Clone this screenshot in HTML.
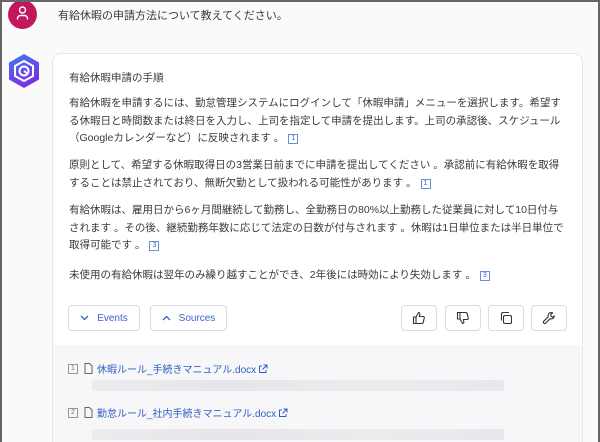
<!DOCTYPE html>
<html><head><meta charset="utf-8">
<style>
*{margin:0;padding:0;box-sizing:border-box}
html,body{width:600px;height:442px;overflow:hidden}
body{background:#fafafb;font-family:"Liberation Sans","Noto Sans CJK JP",sans-serif;color:#333;position:relative}
.frame{position:absolute;left:0;top:0;width:600px;height:442px;border:2px solid #666;border-bottom:none;pointer-events:none;z-index:10}
.t{position:absolute;white-space:nowrap;font-size:10.5px;color:#3a3a3a}
.card{position:absolute;left:52px;top:53px;width:531px;height:389px;background:#fff;border:1px solid #e6e7ec;border-bottom:none;border-radius:9px 9px 0 0;overflow:hidden}
.foot{position:absolute;left:0;top:291px;width:100%;height:98px;background:#f7f7f9}
.btn{position:absolute;top:251px;height:26px;border:1px solid #d8dbe3;border-radius:4px;background:#fff;font-size:10px;color:#3a63c9;display:flex;align-items:center;justify-content:center;gap:8px}
.ib{position:absolute;top:251px;width:36px;height:26px;border:1px solid #d8dbe3;border-radius:4px;background:#fff;display:flex;align-items:center;justify-content:center}
.ref{display:inline-block;width:10px;height:10px;border:1px solid #6b8fd6;font-size:7px;line-height:8px;text-align:center;color:#3a63c9;vertical-align:1px;margin-left:4px}
.bar{position:absolute;height:11px;background:linear-gradient(90deg,#ececef,#e6e6ea,#ececef,#e8e8ec);border-radius:2px}
.src{position:absolute;font-size:10px;color:#2f5fc4;white-space:nowrap;display:flex;align-items:center}
.nb{display:inline-block;width:10px;height:10px;border:1px solid #999;font-size:7px;line-height:8px;text-align:center;color:#777;margin-right:6px}
</style></head><body>
<div class="frame"></div>
<div style="position:absolute;left:8px;top:0;width:29px;height:29px;border-radius:50%;background:#c2185b"></div>
<svg style="position:absolute;left:15px;top:5px" width="15" height="17" viewBox="0 0 15 17"><circle cx="7.5" cy="5" r="3" fill="none" stroke="#fff" stroke-width="1.4"/><path d="M2.5 14.5v-1a3 3 0 0 1 3-3h4a3 3 0 0 1 3 3v1" fill="none" stroke="#fff" stroke-width="1.4"/></svg>
<div class="t" style="left:58px;top:7px;font-size:11px">有給休暇の申請方法について教えてください。</div>

<svg style="position:absolute;left:8px;top:53px" width="32" height="36" viewBox="0 0 32 36"><defs><linearGradient id="g" x1="0" y1="0" x2="0.4" y2="1"><stop offset="0" stop-color="#3f7bf5"/><stop offset="1" stop-color="#7a2fe0"/></linearGradient></defs><polygon points="16,1 31,9.5 31,26.5 16,35 1,26.5 1,9.5" fill="url(#g)"/><polygon points="16,8 25,13 25,23 16,28 7,23 7,13" fill="none" stroke="#fff" stroke-width="2"/><circle cx="16" cy="18" r="4.5" fill="none" stroke="#fff" stroke-width="2"/><path d="M16 18l4 3" stroke="#fff" stroke-width="2"/></svg>

<div class="card">
<div class="t" style="left:16px;top:16px">有給休暇申請の手順</div>
<div class="t" style="left:16px;top:41px;line-height:17.6px">有給休暇を申請するには、勤怠管理システムにログインして「休暇申請」メニューを選択します。希望す<br>る休暇日と時間数または終日を入力し、上司を指定して申請を提出します。上司の承認後、スケジュール<br>（Googleカレンダーなど）に反映されます 。<span class="ref">1</span></div>
<div class="t" style="left:16px;top:103px;line-height:17.6px">原則として、希望する休暇取得日の3営業日前までに申請を提出してください 。承認前に有給休暇を取得<br>することは禁止されており、無断欠勤として扱われる可能性があります 。<span class="ref">1</span></div>
<div class="t" style="left:16px;top:148px;line-height:17.6px">有給休暇は、雇用日から6ヶ月間継続して勤務し、全勤務日の80%以上勤務した従業員に対して10日付与<br>されます 。その後、継続勤務年数に応じて法定の日数が付与されます 。休暇は1日単位または半日単位で<br>取得可能です 。<span class="ref">3</span></div>
<div class="t" style="left:16px;top:213px">未使用の有給休暇は翌年のみ繰り越すことができ、2年後には時効により失効します 。<span class="ref">3</span></div>

<div class="btn" style="left:15px;width:72px"><svg width="9" height="6"><path d="M1 1l3.5 3.5L8 1" fill="none" stroke="#3a63c9" stroke-width="1.3"/></svg>Events</div>
<div class="btn" style="left:97px;width:77px"><svg width="9" height="6"><path d="M1 5l3.5-3.5L8 5" fill="none" stroke="#3a63c9" stroke-width="1.3"/></svg>Sources</div>
<div class="ib" style="left:348px"><svg width="14" height="14" viewBox="0 0 14 14" fill="none" stroke="#333" stroke-width="1.1"><path d="M1.5 6h2.5v6.5H1.5zM4 6l2.5-4.5c1 0 1.5.7 1.3 1.7L7.4 5.5h3.8c.8 0 1.3.7 1.1 1.4l-1.1 4.4c-.2.7-.7 1.2-1.4 1.2H4"/></svg></div>
<div class="ib" style="left:392px"><svg width="14" height="14" viewBox="0 0 14 14" fill="none" stroke="#333" stroke-width="1.1"><path d="M1.5 8h2.5V1.5H1.5zM4 8l2.5 4.5c1 0 1.5-.7 1.3-1.7L7.4 8.5h3.8c.8 0 1.3-.7 1.1-1.4L11.2 2.7c-.2-.7-.7-1.2-1.4-1.2H4"/></svg></div>
<div class="ib" style="left:435px"><svg width="14" height="14" viewBox="0 0 14 14" fill="none" stroke="#333" stroke-width="1.1"><rect x="4.5" y="4.5" width="8" height="8" rx="1.5"/><path d="M2.5 9.5V3a1.5 1.5 0 0 1 1.5-1.5h6"/></svg></div>
<div class="ib" style="left:478px"><svg width="14" height="14" viewBox="0 0 14 14" fill="none" stroke="#333" stroke-width="1.1" stroke-linejoin="round"><path d="M9 1.5a3.2 3.2 0 0 0-2.8 4.3L1.8 10.2a1.3 1.3 0 0 0 1.9 1.9l4.4-4.4A3.2 3.2 0 0 0 12.4 5L10.5 6.2 8.9 5.1 8.8 3.3 10.6 2A3.2 3.2 0 0 0 9 1.5z"/></svg></div>

<div class="foot">
<div class="src" style="left:15px;top:16px"><span class="nb">1</span><svg width="9" height="11" style="margin-right:4px"><path d="M1 .5h4.5L8 3v7.5H1z" fill="none" stroke="#666"/></svg>休暇ルール_手続きマニュアル.docx<svg width="10" height="10" style="margin-left:2px"><path d="M4 2H1.5v6.5H8V6M5.5 1H9v3.5M9 1L4.5 5.5" fill="none" stroke="#2f5fc4"/></svg></div>
<div class="bar" style="left:39px;top:35px;width:412px"></div>
<div class="src" style="left:15px;top:60px"><span class="nb">2</span><svg width="9" height="11" style="margin-right:4px"><path d="M1 .5h4.5L8 3v7.5H1z" fill="none" stroke="#666"/></svg>勤怠ルール_社内手続きマニュアル.docx<svg width="10" height="10" style="margin-left:2px"><path d="M4 2H1.5v6.5H8V6M5.5 1H9v3.5M9 1L4.5 5.5" fill="none" stroke="#2f5fc4"/></svg></div>
<div class="bar" style="left:39px;top:84px;width:412px"></div>
</div>
</div>
</body></html>
